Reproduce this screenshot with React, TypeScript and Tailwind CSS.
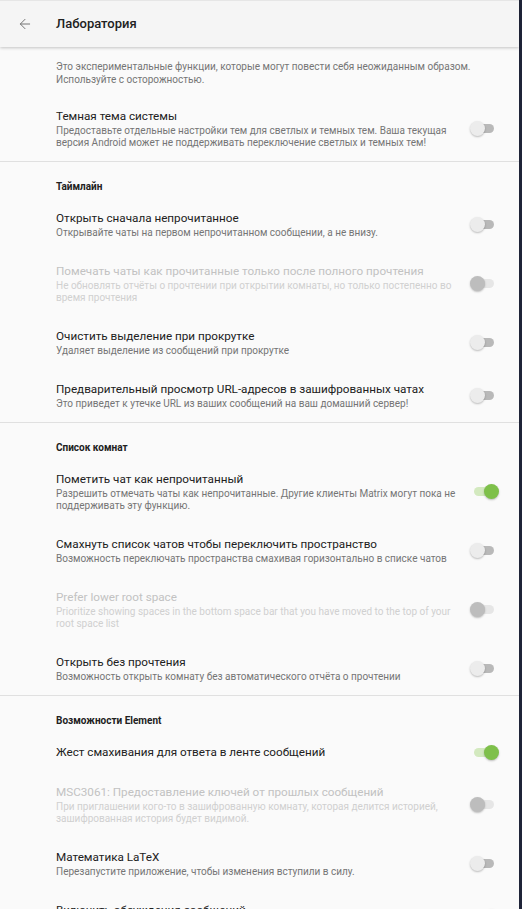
import { ArrowLeft } from "lucide-react";

type Pref = {
  title: string;
  summary?: string;
  on?: boolean;
  disabled?: boolean;
};

type Section = {
  header?: string;
  items: Pref[];
};

const sections: Section[] = [
  {
    items: [
      {
        title: "Темная тема системы",
        summary:
          "Предоставьте отдельные настройки тем для светлых и темных тем. Ваша текущая версия Android может не поддерживать переключение светлых и темных тем!",
      },
    ],
  },
  {
    header: "Таймлайн",
    items: [
      {
        title: "Открыть сначала непрочитанное",
        summary: "Открывайте чаты на первом непрочитанном сообщении, а не внизу.",
      },
      {
        title: "Помечать чаты как прочитанные только после полного прочтения",
        summary:
          "Не обновлять отчёты о прочтении при открытии комнаты, но только постепенно во время прочтения",
        disabled: true,
      },
      {
        title: "Очистить выделение при прокрутке",
        summary: "Удаляет выделение из сообщений при прокрутке",
      },
      {
        title: "Предварительный просмотр URL-адресов в зашифрованных чатах",
        summary: "Это приведет к утечке URL из ваших сообщений на ваш домашний сервер!",
      },
    ],
  },
  {
    header: "Список комнат",
    items: [
      {
        title: "Пометить чат как непрочитанный",
        summary:
          "Разрешить отмечать чаты как непрочитанные. Другие клиенты Matrix могут пока не поддерживать эту функцию.",
        on: true,
      },
      {
        title: "Смахнуть список чатов чтобы переключить пространство",
        summary: "Возможность переключать пространства смахивая горизонтально в списке чатов",
      },
      {
        title: "Prefer lower root space",
        summary:
          "Prioritize showing spaces in the bottom space bar that you have moved to the top of your root space list",
        disabled: true,
      },
      {
        title: "Открыть без прочтения",
        summary: "Возможность открыть комнату без автоматического отчёта о прочтении",
      },
    ],
  },
  {
    header: "Возможности Element",
    items: [
      { title: "Жест смахивания для ответа в ленте сообщений", on: true },
      {
        title: "MSC3061: Предоставление ключей от прошлых сообщений",
        summary:
          "При приглашении кого-то в зашифрованную комнату, которая делится историей, зашифрованная история будет видимой.",
        disabled: true,
      },
      {
        title: "Математика LaTeX",
        summary: "Перезапустите приложение, чтобы изменения вступили в силу.",
      },
      {
        title: "Включить обсуждения сообщений",
        summary: "Перезапустите приложение, чтобы изменения вступили в силу.",
        on: true,
      },
    ],
  },
];

function Switch({ on, disabled }: { on?: boolean; disabled?: boolean }) {
  const track = on ? "bg-[#d3e9bf]" : disabled ? "bg-[#e6e6e6]" : "bg-[#b9b9b9]";
  const thumb = on
    ? "right-0 bg-[#7ec04a]"
    : disabled
      ? "left-[1px] bg-[#bdbdbd]"
      : "left-[1px] bg-[#ececec]";
  return (
    <div className="relative h-[16px] w-[30px] shrink-0">
      <div className={`absolute left-[5px] top-[3.5px] h-[9px] w-[20px] rounded-full ${track}`} />
      <div
        className={`absolute top-[0.5px] h-[15px] w-[15px] rounded-full shadow-[0_1px_2px_rgba(0,0,0,0.25)] ${thumb}`}
      />
    </div>
  );
}

function PrefRow({ p }: { p: Pref }) {
  return (
    <div className="flex items-center py-3 pl-[56px] pr-[20px]">
      <div className="min-w-0 flex-1 pr-[10px]">
        <div
          className={`text-[11.7px] leading-[16px] ${p.disabled ? "text-[#c2c2c2]" : "text-[#212121]"}`}
        >
          {p.title}
        </div>
        {p.summary && (
          <div
            className={`mt-[1px] text-[10px] leading-[12px] ${p.disabled ? "text-[#d0d0d0]" : "text-[#757575]"}`}
          >
            {p.summary}
          </div>
        )}
      </div>
      <Switch on={p.on} disabled={p.disabled} />
    </div>
  );
}

export default function App() {
  return (
    <div
      className="flex h-screen overflow-hidden bg-[#1f2438]"
      style={{ fontFamily: "Roboto, 'Noto Sans', sans-serif" }}
    >
      <div className="flex min-w-0 flex-1 flex-col bg-[#fafafa]">
        <div className="relative z-10 flex h-[47px] shrink-0 items-center border-t border-[#e6e6e6] bg-[#f5f5f5] shadow-[0_1px_3px_rgba(0,0,0,0.22)]">
          <ArrowLeft className="ml-[17px] h-[16px] w-[16px] text-[#757575]" strokeWidth={1.5} />
          <h1 className="ml-[23px] text-[13px] font-medium text-[#212121]">Лаборатория</h1>
        </div>

        <div className="flex-1">
          <p className="pb-[10px] pl-[56px] pr-[40px] pt-[13px] text-[10px] leading-[13px] text-[#757575]">
            Это экспериментальные функции, которые могут повести себя неожиданным образом.
            Используйте с осторожностью.
          </p>

          {sections.map((s, i) => (
            <div key={i} className={i > 0 ? "border-t border-[#e0e0e0]" : ""}>
              {s.header && (
                <div className="pb-[4px] pl-[56px] pt-[18px] text-[10px] font-bold leading-[14px] text-[#212121]">
                  {s.header}
                </div>
              )}
              {s.items.map((p) => (
                <PrefRow key={p.title} p={p} />
              ))}
            </div>
          ))}
        </div>
      </div>
      <div className="w-[3px] shrink-0" />
    </div>
  );
}
